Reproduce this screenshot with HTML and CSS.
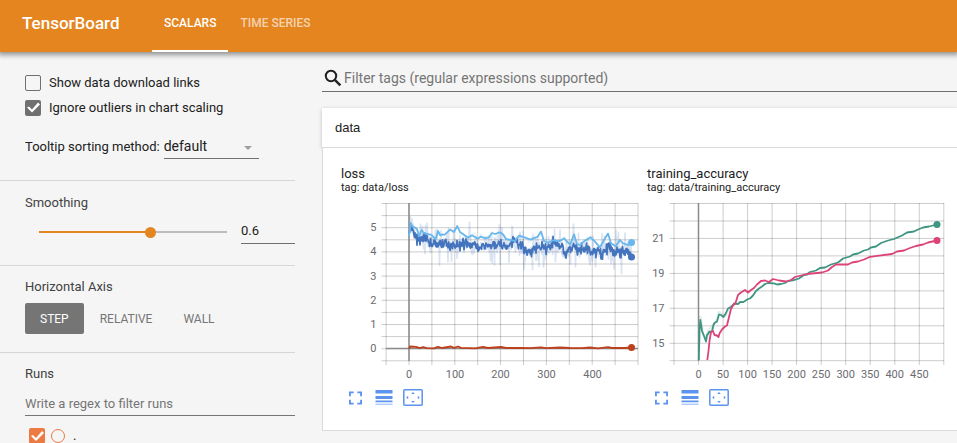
FILE: index.html
```html
<!DOCTYPE html>
<html lang="en">
<head>
<meta charset="utf-8">
<title>TensorBoard</title>
<link rel="stylesheet" href="styles.css">
</head>
<body>
<svg class="sprite" aria-hidden="true">
  <symbol id="icon-expand" viewBox="0 0 14 14">
    <path d="M0 0h5v2H2v3H0zM9 0h5v5h-2V2H9zM0 9h2v3h3v2H0zM12 9h2v5H9v-2h3z"/>
  </symbol>
  <symbol id="icon-lines" viewBox="0 0 17 15">
    <path d="M0 0h17v3.500H0zM0 6h17v3H0zM0 10.500h17v1.700H0z"/><path d="M0 13.700h17v1H0z" opacity=".7"/>
  </symbol>
  <symbol id="icon-fit" viewBox="0 0 20 17">
    <rect x=".8" y=".8" width="18.4" height="15.4" rx="1" fill="none" stroke="currentColor" stroke-width="1.5"/>
    <path d="M10 3l1.800 2H8.200zM10 14l1.800-2H8.200zM3.200 8.500l2-1.800v3.600zM16.800 8.500l-2-1.800v3.600z"/>
  </symbol>
</svg>
<header class="toolbar">
  <h1 class="brand">TensorBoard</h1>
  <nav class="tabs">
    <a class="tab tab-active" href="#scalars">SCALARS</a>
    <a class="tab" href="#timeseries">TIME SERIES</a>
  </nav>
</header>
<div class="page">
  <aside class="sidebar">
    <section class="panel panel-options">
      <label class="check-row"><input type="checkbox" class="check">Show data download links</label>
      <label class="check-row"><input type="checkbox" class="check" checked>Ignore outliers in chart scaling</label>
      <div class="sort-row">
        <label for="sort">Tooltip sorting method:</label>
        <span class="select-wrap"><select id="sort" class="select"><option>default</option></select></span>
      </div>
    </section>
    <section class="panel panel-smooth">
      <label class="panel-title" for="smooth">Smoothing</label>
      <div class="smooth-row">
        <input id="smooth" class="slider" type="range" min="0" max="1" step="0.001" value="0.6">
        <input class="smooth-value" type="text" value="0.6" aria-label="Smoothing value">
      </div>
    </section>
    <section class="panel panel-axis">
      <div class="panel-title">Horizontal Axis</div>
      <div class="axis-row">
        <button class="axis axis-on" type="button">STEP</button>
        <button class="axis" type="button">RELATIVE</button>
        <button class="axis" type="button">WALL</button>
      </div>
    </section>
    <section class="panel panel-runs">
      <label class="panel-title" for="runs">Runs</label>
      <input id="runs" class="runs-filter" type="text" placeholder="Write a regex to filter runs">
      <div class="run-row">
        <input id="run0" type="checkbox" class="check check-run" checked>
        <span class="run-dot"></span>
        <label for="run0">.</label>
      </div>
    </section>
  </aside>
  <main class="main">
    <label class="filter">
      <svg class="search" viewBox="0 0 18 18" aria-hidden="true"><circle cx="7" cy="7" r="5.200" fill="none" stroke="currentColor" stroke-width="2"/><path d="M10.800 10.800l5.600 5.600" stroke="currentColor" stroke-width="2.400"/></svg>
      <input class="filter-input" type="text" placeholder="Filter tags (regular expressions supported)" aria-label="Filter tags">
    </label>
    <section class="card">
      <button class="card-head" type="button">data</button>
      <div class="card-body">
        <article class="chart-card">
          <h2 class="chart-title">loss</h2>
          <p class="chart-tag">tag: data/loss</p>
          <svg id="loss" class="chart" viewBox="341 200 306 184" role="img" aria-label="loss"></svg>
          <div class="actions">
            <button type="button" aria-label="Expand"><svg class="i-expand"><use href="#icon-expand"/></svg></button>
            <button type="button" aria-label="Toggle log scale"><svg class="i-lines"><use href="#icon-lines"/></svg></button>
            <button type="button" aria-label="Fit domain"><svg class="i-fit"><use href="#icon-fit"/></svg></button>
          </div>
        </article>
        <article class="chart-card">
          <h2 class="chart-title">training_accuracy</h2>
          <p class="chart-tag">tag: data/training_accuracy</p>
          <svg id="accuracy" class="chart" viewBox="647 200 306 184" role="img" aria-label="training accuracy"></svg>
          <div class="actions">
            <button type="button" aria-label="Expand"><svg class="i-expand"><use href="#icon-expand"/></svg></button>
            <button type="button" aria-label="Toggle log scale"><svg class="i-lines"><use href="#icon-lines"/></svg></button>
            <button type="button" aria-label="Fit domain"><svg class="i-fit"><use href="#icon-fit"/></svg></button>
          </div>
        </article>
      </div>
    </section>
  </main>
</div>
<script src="charts.js"></script>
</body>
</html>
```
FILE: styles.css
```css
* { box-sizing: border-box; }
body {
  margin: 0;
  min-height: 100vh;
  background: #f5f5f5;
  color: #212121;
  font-family: Roboto, "Liberation Sans", sans-serif;
  font-size: 13px;
  line-height: 16px;
  overflow: hidden;
}
button, input, select { font: inherit; color: inherit; }
button { border: 0; padding: 0; background: none; }
.sprite { display: none; }

.toolbar {
  position: relative;
  display: flex;
  height: 52px;
  padding-left: 22px;
  background: #e5851f;
  color: #fff;
  box-shadow: 0 1px 5px 2px rgba(0, 0, 0, .4);
}
.brand {
  width: 130px;
  margin: 0;
  font-size: 17px;
  font-weight: 500;
  line-height: 46px;
}
.tabs { display: flex; }
.tab {
  padding: 0 12px;
  color: rgba(255, 255, 255, .65);
  font-size: 12px;
  font-weight: 500;
  line-height: 46px;
  text-decoration: none;
}
.tab-active { color: #fff; border-bottom: 2px solid #fff; }

.page { display: flex; }
.sidebar { flex: none; width: 295px; }
.panel { padding-left: 25px; border-bottom: 1px solid #d6d6d6; }
.panel-title { display: block; color: #424242; }
.panel-options { height: 129px; padding-top: 18px; }
.check-row { display: flex; align-items: center; gap: 8px; height: 25px; }
.check {
  flex: none;
  appearance: none;
  display: block;
  width: 16px;
  height: 16px;
  margin: 0;
  border: 1px solid #707070;
  border-radius: 2px;
}
.check:checked { border: 0; background: #707070; }
.check:checked::before {
  content: "";
  display: block;
  width: 16px;
  height: 16px;
  background: #fff;
  clip-path: polygon(2px 8px, 4px 7px, 7px 10px, 13px 3px, 15px 5px, 7px 13px);
}
.sort-row { display: flex; align-items: center; gap: 4px; margin-top: 15px; }
.select-wrap { position: relative; }
.select-wrap::after {
  content: "";
  position: absolute;
  right: 7px;
  top: 11px;
  border: 4px solid transparent;
  border-top: 4px solid #9e9e9e;
  border-bottom: 0;
  pointer-events: none;
}
.select {
  appearance: none;
  display: block;
  width: 95px;
  height: 24px;
  padding: 0 0 2px;
  border: 0;
  border-bottom: 1px solid #707070;
  border-radius: 0;
  background: none;
  font-size: 14px;
}
.panel-smooth { height: 85px; padding-top: 14px; }
.smooth-row { display: flex; align-items: center; gap: 14px; padding-left: 14px; margin-top: 9px; }
.slider {
  appearance: none;
  flex: 1;
  min-width: 0;
  height: 12px;
  margin: 0;
  background: linear-gradient(90deg, #e5851f 60%, #bdbdbd 60%) center / 100% 2px no-repeat;
}
.slider::-webkit-slider-thumb {
  appearance: none;
  width: 11px;
  height: 11px;
  border-radius: 50%;
  background: #e5851f;
}
.smooth-value {
  width: 54px;
  height: 24px;
  padding: 0 0 2px;
  border: 0;
  border-bottom: 1px solid #707070;
  background: none;
}
.panel-axis { height: 87px; padding-top: 13px; }
.axis-row { display: flex; gap: 1px; margin-top: 8px; }
.axis { height: 31px; padding: 0 15px; border-radius: 2px; color: #757575; font-size: 12px; }
.axis-on { background: #757575; color: #fff; }
.panel-runs { padding-top: 13px; border: 0; }
.runs-filter {
  display: block;
  width: 100%;
  height: 24px;
  margin-top: 10px;
  padding: 0;
  border: 0;
  border-bottom: 1px solid #757575;
  background: none;
}
::placeholder { color: #757575; opacity: 1; }
.run-row { display: flex; align-items: center; gap: 6px; padding: 12px 0 0 4px; }
.run-row label { margin-left: 2px; }
.check-run:checked { background: #ee7a43; }
.run-dot { width: 14px; height: 14px; border: 1px solid #ee7a43; border-radius: 50%; }

.main { flex: 1; min-width: 0; padding: 13px 0 12px 27px; }
.filter { display: flex; align-items: center; gap: 2px; height: 27px; padding-left: 2px; border-bottom: 1px solid #707070; }
.search { flex: none; width: 18px; height: 18px; }
.filter-input { flex: 1; min-width: 0; height: 24px; padding: 0; border: 0; background: none; font-size: 14px; }
.card { margin: 16px 0 0; }
.card-head {
  display: block;
  width: 100%;
  height: 40px;
  padding-left: 13px;
  border-bottom: 1px solid #dadada;
  background: #fff;
  box-shadow: 0 1px 4px rgba(0, 0, 0, .22);
  font-family: "Liberation Sans", sans-serif;
  font-size: 13px;
  text-align: left;
}
.card-body {
  position: relative;
  display: flex;
  height: 283px;
  padding: 18px 0 0 18px;
  border: 1px solid #dadada;
  border-width: 0 0 1px 1px;
  background: #fff;
}
.chart-card { flex: none; width: 306px; }
.chart-title { margin: 0; font-size: 13px; font-weight: 400; line-height: 16px; }
.chart-tag { margin: 0; font-size: 11px; line-height: 12px; }
.chart { display: block; width: 306px; height: 184px; margin-top: 6px; }
.chart text { fill: #6b6b70; font-size: 11px; }
.actions { display: flex; align-items: center; height: 27px; padding-left: 8px; gap: 12px; color: #5c93ee; }
.actions svg { display: block; fill: currentColor; }
.i-expand { width: 13px; height: 14px; }
.i-lines { width: 18px; height: 15px; }
.i-fit { width: 20px; height: 17px; }
.actions button:nth-child(2) { margin-left: 1px; }
.actions button:last-child { margin-left: -2px; }
```
FILE: charts.js
```js
const NS = 'http://www.w3.org/2000/svg';

function add(parent, name, attrs, text) {
  const el = document.createElementNS(NS, name);
  for (const key in attrs) el.setAttribute(key, attrs[key]);
  if (text !== undefined) el.textContent = text;
  parent.appendChild(el);
}

// Small deterministic generator, so the noise is the same on every load.
let seed = 11;
function random() {
  seed = (seed * 1664525 + 1013904223) % 4294967296;
  return seed / 4294967296;
}

function grid(svg, o) {
  o.xs.forEach(x => add(svg, 'path', { d: `M${x} 203V365`, stroke: '#000', 'stroke-opacity': .2 }));
  o.ys.forEach(y => add(svg, 'path', { d: `M${o.left} ${y}H${o.right}`, stroke: '#000', 'stroke-opacity': .2 }));
  add(svg, 'path', { d: `M${o.zeroX} 203V361`, stroke: '#8a8a8a', 'stroke-width': 1.5 });
  o.xLabels.forEach(([x, t]) => add(svg, 'text', { x, y: 378, 'text-anchor': 'middle' }, t));
  o.yLabels.forEach(([y, t]) => add(svg, 'text', { x: o.left - 5, y: y + 3.5, 'text-anchor': 'end' }, t));
}

function line(svg, pts, color, width, opacity = 1) {
  add(svg, 'polyline', { points: pts.map(p => p.join()).join(' '), fill: 'none', stroke: color, 'stroke-width': width, 'stroke-opacity': opacity, 'stroke-linejoin': 'round' });
}

function noisy(pts, amount, spikes, step = .5) {
  const out = [];
  for (let i = 0, x = pts[0][0]; x < pts[pts.length - 1][0]; x += step) {
    while (pts[i + 1][0] < x) i++;
    const [a, b] = [pts[i], pts[i + 1]];
    const y = a[1] + (b[1] - a[1]) * (x - a[0]) / (b[0] - a[0]);
    const n = random() * 2 - 1;
    out.push([x.toFixed(1), (y + n * amount + Math.pow(n, 9) * spikes).toFixed(1)]);
  }
  out.push(pts[pts.length - 1]);
  return out;
}

const range = (start, step, count) => Array.from({ length: count }, (_, i) => +(start + i * step).toFixed(1));

const loss = document.getElementById('loss');
grid(loss, {
  xs: range(386.1, 22.9, 12), ys: range(203.5, 12.1, 14), left: 381.5, right: 638, zeroX: 409,
  xLabels: [[409, 0], [455, 100], [500.5, 200], [546.5, 300], [592.5, 400]],
  yLabels: [[348.5, 0], [324.5, 1], [300, 2], [276, 3], [251.5, 4], [227.5, 5]]
});
add(loss, 'path', { d: 'M386 348.500H638', stroke: '#8a8a8a', 'stroke-width': 1.5 });

const evalLoss = [[409,236],[410.600,223],[412,226],[415,227.600],[417,229],[419,236.300],[421.600,230],[424,233.300],[428,234],[431.600,235],[435.600,239.300],[438,231],[440,235],[445,234.300],[450,229.600],[454,232],[457.300,226],[460,232],[465,235.600],[468,237.600],[472,235.300],[477.600,238.600],[481,236.600],[485,238.300],[489,237.300],[492,233],[495,234],[500,232.300],[503,234.300],[506,239],[515,241],[519,235.600],[525,237.600],[530.600,239.600],[535,237.600],[537.300,237],[541,231.600],[544,241],[548,242.600],[553,240.300],[560,241],[564,238.300],[570,244.600],[574,234.300],[577,244],[580,245],[585,240.600],[590.600,237.300],[595,241.600],[600,247.300],[604,240],[608,233.600],[611,243.300],[615.600,246.300],[620,240],[623,243.300],[628,245],[631.500,242.500]];
const trainLoss = [[409,236],[411,224],[413,232],[417,238.300],[422,239],[427,238.300],[430,241.600],[435,243],[440,245],[445,243.300],[450,245],[460,244],[468,244],[475,244.300],[478,247.600],[483,245.600],[490,246],[500,244.300],[505,246.600],[512,243.300],[520,243.300],[525,250],[530,251.600],[535,248.300],[541,246.600],[547,250],[553,243.300],[557,243.300],[562,248.300],[567,254],[573,245],[580,250],[585,246.600],[592,253.300],[598,250],[602,254],[608,246.600],[613,252.300],[618,251.600],[623,253.300],[628,250],[631.500,257]];
line(loss, noisy(trainLoss, 8, 14, .5), '#4374bd', 1.6, .2);
line(loss, noisy(evalLoss, 2, 3, 1.5), '#69b7ec', 1.5, .15);
line(loss, noisy(trainLoss, 4, 3, .5), '#4374bd', 1.7);
line(loss, evalLoss, '#69b7ec', 1.8);
add(loss, 'circle', { cx: 631.5, cy: 242.5, r: 3.5, fill: '#69b7ec' });
add(loss, 'circle', { cx: 631.5, cy: 257, r: 3.5, fill: '#4374bd' });

const flat = [[409,349],[410,346.500],[416,346.800],[420,348.200],[423,347],[427,348.200],[434,348.300],[438,346.800],[442,348],[451,346.500],[454,347.800],[458,346.500],[461,347.800],[475,348.300],[483,346.900],[488,348],[501,347],[506,348],[520,347.900],[530,348.200],[541,347.300],[546,348.200],[560,347.500],[570,348],[582,348.200],[590,347.500],[598,348.300],[608,347.200],[612,348],[625,348],[631,347.500]];
line(loss, flat, '#bd401c', 1.8);
add(loss, 'circle', { cx: 631.5, cy: 347.5, r: 3.5, fill: '#bd401c' });

const accuracy = document.getElementById('accuracy');
grid(accuracy, {
  xs: range(674, 24.53, 12), ys: range(203.5, 17.47, 10), left: 669.5, right: 944, zeroX: 698.5,
  xLabels: range(698.5, 24.53, 10).map((x, i) => [x, i * 50]),
  yLabels: [[238, 21], [273.5, 19], [308.5, 17], [343.5, 15]]
});
const green = [[698.800,360],[699.500,330],[700.300,320],[702,331],[704,336],[706,341.500],[707,335],[708,334],[709,332],[712,331.500],[713.500,325],[714.500,323],[717,321.500],[719,314.500],[721,315],[723.500,317],[726,313],[728,308.500],[731,307],[734,303.500],[738,304],[740.500,301.800],[743,302.200],[748,299],[750,298.500],[753,295.500],[756,291],[759,288.500],[762,286.500],[765,284],[768,283],[774,283.300],[777,284.500],[781,284],[785,283],[788,281],[793,280.300],[799,278.500],[804,275],[807,274.500],[810,272],[816,270.500],[820,268],[825,267.500],[831,264.500],[838,262.500],[843,258.500],[850,256.500],[853,254.500],[858,253.500],[864,250.500],[868,249.500],[871,247.500],[876,246.500],[881,243],[888,240.500],[894,239],[902,235.500],[907,232.500],[914,231.500],[918,229.500],[923,227.500],[929,226.500],[937,224.500]];
const pink = [[707.300,360],[708.500,351],[709.500,341],[711,332],[713,331],[714.500,335],[717,335.500],[718.500,337],[719.500,333.500],[722,329.500],[725,326.500],[727,325.500],[729,317],[731,309],[733,305.500],[735.500,303],[738,295],[741,292.500],[745,290],[748,292.500],[751,290],[754,288],[757,284.500],[761,281],[765,280.500],[769,282],[773,279],[779,280.500],[786,281.500],[791,280],[795,277],[801,275.500],[807,274],[812,273.500],[822,272.500],[828,270.500],[832,267],[836,264.500],[848,264.500],[852,262.500],[858,261.500],[864,259.500],[869,257.200],[877,255.800],[892,254],[897,251.500],[904,250.500],[910,248],[916,246],[923,244.500],[928,242.500],[937,240.500]];
line(accuracy, [[699,345],[700.3,317],[703,334],[706,338],[709,330],[717,320],[719,312],[725,316],[731,305]], '#3f9582', 2.5, .15);
line(accuracy, green, '#3f9582', 1.8);
line(accuracy, pink, '#dc4479', 1.8);
add(accuracy, 'circle', { cx: 937, cy: 224.5, r: 3.5, fill: '#3f9582' });
add(accuracy, 'circle', { cx: 937, cy: 240.5, r: 3.5, fill: '#dc4479' });
```
